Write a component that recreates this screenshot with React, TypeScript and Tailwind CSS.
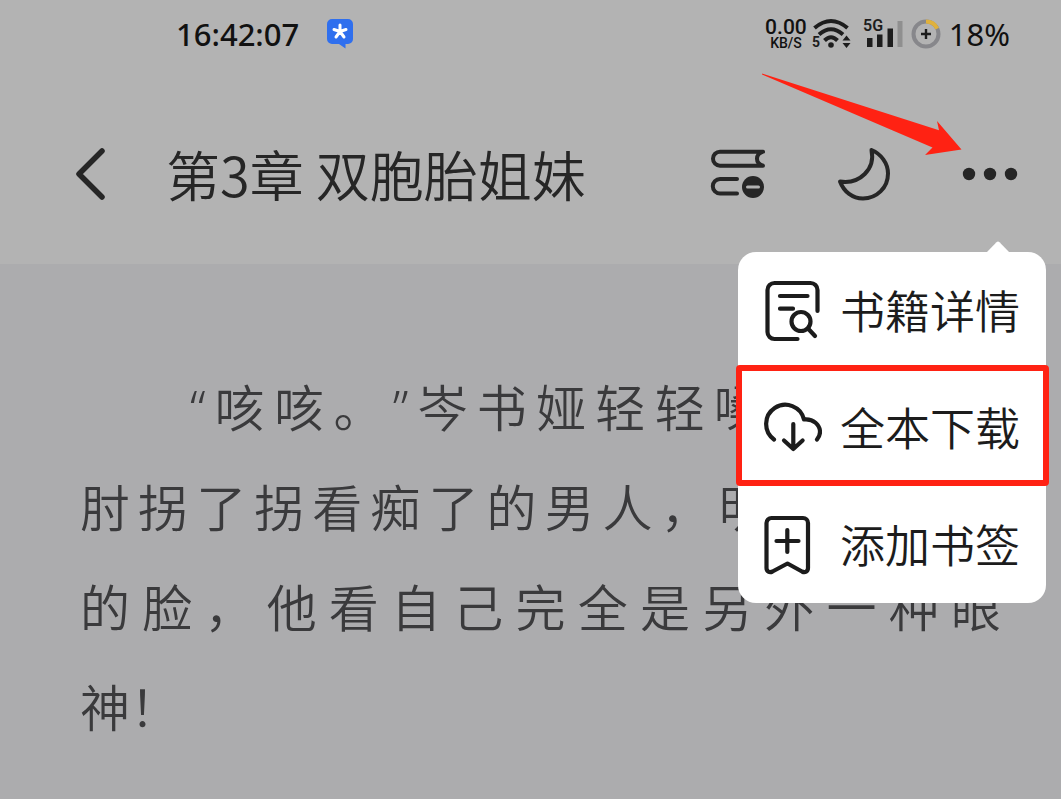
import type { ReactNode } from 'react'

const lines = [
  { text: '“咳咳。”岑书娅轻轻嗓两声，手', indent: true },
  { text: '肘拐了拐看痴了的男人，明明是同样', indent: false },
  { text: '的脸，他看自己完全是另外一种眼', indent: false },
]

function ChatBadge() {
  return (
    <svg width="26" height="30" viewBox="0 0 26 30" aria-hidden="true">
      <path d="M5 0h16a5 5 0 0 1 5 5v15a5 5 0 0 1-5 5h-2.500v4.500L12 25H5a5 5 0 0 1-5-5V5a5 5 0 0 1 5-5z" fill="#2f6fee" />
      <path d="M13 12.500V6M13 12.500l6-2M13 12.500l4 5.500M13 12.500L9 18M13 12.500l-6-2" stroke="#fff" strokeWidth="3" strokeLinecap="round" />
    </svg>
  )
}

function WifiIcon() {
  return (
    <svg width="40" height="32" viewBox="0 0 40 32" fill="none" stroke="#1d1d1d" strokeWidth="4" aria-hidden="true">
      <path d="M3.500 10Q20 -4 36.500 10M8 16.500Q20 6 32 16.500M13.500 22.500Q20 16 26.500 22.500" />
      <circle cx="20" cy="27" r="2.800" fill="#1d1d1d" stroke="none" />
      <path d="M31.500 22.500l4-5 4 5zM31.500 25l4 5 4-5z" fill="#1d1d1d" stroke="none" />
      <text x="1" y="29" fill="#1d1d1d" stroke="none" fontSize="14" fontWeight="700">5</text>
    </svg>
  )
}

function SignalIcon() {
  return (
    <svg width="40" height="40" viewBox="0 -4 40 40" fill="#1d1d1d" aria-hidden="true">
      <text x="0" y="13" fontSize="16" fontWeight="600">5G</text>
      <path d="M4 20h5.500v9H4zM14 16.500h5.500V29H14zM24.500 10.500H30V29h-5.500z" />
      <path d="M34.500 3h5v26h-5z" fill="#8f8f8f" />
    </svg>
  )
}

function BatteryIcon() {
  return (
    <svg width="30" height="30" viewBox="0 0 30 30" fill="none" aria-hidden="true">
      <circle cx="15" cy="15" r="12.500" stroke="#87878b" strokeWidth="4" />
      <path d="M15 2.500A12.500 12.500 0 0 1 26.300 9.700" stroke="#e0b13c" strokeWidth="4" />
      <path d="M15 10v10M10 15h10" stroke="#1d1d1d" strokeWidth="2.400" />
    </svg>
  )
}

function BackIcon() {
  return (
    <svg width="31" height="54" viewBox="0 0 31 54" fill="none" stroke="#262626" strokeWidth="5.500" strokeLinecap="round" strokeLinejoin="round" aria-hidden="true">
      <path d="M27 4L4 27l23 23" />
    </svg>
  )
}

function ShelfRemoveIcon() {
  return (
    <svg width="55" height="50" viewBox="0 0 55 50" fill="none" stroke="#262626" strokeWidth="4" strokeLinecap="round" strokeLinejoin="round" aria-hidden="true">
      <path d="M53 2.700H10a7 7 0 0 0 0 14h43C45 14 45 5.400 53 2.700z" />
      <path d="M27 30H10a7.200 7.200 0 0 0 0 14.400H27" />
      <circle cx="43" cy="38" r="11" fill="#262626" stroke="none" />
      <path d="M37.500 38h11" stroke="#b3b3b3" strokeWidth="3" />
    </svg>
  )
}

function MoonIcon() {
  return (
    <svg width="55" height="54" viewBox="0 0 55 54" fill="none" stroke="#262626" strokeWidth="4" strokeLinejoin="round" aria-hidden="true">
      <path d="M35.500 3C45 7 52 16 52 26.500 52 41 40.500 51.500 27 51.500 16.500 51.500 8 45 4 34.500 24 37.500 39.500 22 35.500 3z" />
    </svg>
  )
}

function MoreIcon() {
  return (
    <svg width="56" height="14" viewBox="0 0 56 14" fill="#262626" aria-hidden="true">
      <circle cx="7" cy="7" r="6.200" />
      <circle cx="28" cy="7" r="6.200" />
      <circle cx="49" cy="7" r="6.200" />
    </svg>
  )
}

function DetailIcon() {
  return (
    <svg width="58" height="62" viewBox="0 0 58 62" fill="none" stroke="#1c1c1c" strokeWidth="4.200" strokeLinecap="round" strokeLinejoin="round" aria-hidden="true">
      <path d="M53.500 31V10a7 7 0 0 0-7-7H10.500a7 7 0 0 0-7 7v42a7 7 0 0 0 7 7h23" />
      <path d="M16 16h27.500M16 28.700h13" />
      <circle cx="37" cy="41.500" r="9.500" />
      <path d="M44 48.500l7 7.500" />
    </svg>
  )
}

function CloudDownloadIcon() {
  return (
    <svg width="58" height="53" viewBox="0 0 58 53" fill="none" stroke="#1c1c1c" strokeWidth="4.200" strokeLinecap="round" strokeLinejoin="round" aria-hidden="true">
      <path d="M10 38.500A19.200 19.200 0 1 1 40 18.500C49.500 17.500 56 24 56 31c0 3-1 5-3 7.500" />
      <path d="M29.300 23v25M20 39.500l9.300 8.500 9.300-8.500" />
    </svg>
  )
}

function BookmarkIcon() {
  return (
    <svg width="48" height="60" viewBox="0 0 48 60" fill="none" stroke="#1c1c1c" strokeWidth="4.200" strokeLinecap="round" strokeLinejoin="round" aria-hidden="true">
      <path d="M7.500 3h31.500a5 5 0 0 1 5 5v45c0 3.500-3 5-6 3.500L23.500 48.500 8.500 56.500C5.500 58 2.500 56.500 2.500 53V8a5 5 0 0 1 5-5z" />
      <path d="M23.300 15v22M12.500 26h22" />
    </svg>
  )
}

function MenuItem({ icon, label, highlighted = false }: { icon: ReactNode; label: string; highlighted?: boolean }) {
  return (
    <li className="relative">
      <button type="button" className="flex h-[117px] w-full items-center gap-4 pl-[26px] text-left text-[45px] leading-none whitespace-nowrap text-[#1c1c1c]">
        <span className="flex w-[60px] shrink-0">{icon}</span>
        <span className="pb-0.5">{label}</span>
      </button>
      {highlighted && <span className="pointer-events-none absolute -top-1 -right-[3px] bottom-0 -left-[2px] rounded-[4px] border-6 border-[#ff2213]" />}
    </li>
  )
}

function App() {
  return (
    <div className="relative min-h-screen overflow-hidden bg-[#acacae] font-['Noto_Sans_CJK_SC',sans-serif] font-[350]">
      <header className="h-[264px] bg-[#b3b3b3]">
        <div className="flex h-[68px] items-center justify-between pr-[51px] pl-[176px] font-['Noto_Sans',sans-serif] font-medium text-[#111]">
          <div className="flex items-center gap-7">
            <time className="text-[31px] leading-none">16:42:07</time>
            <ChatBadge />
          </div>
          <div className="flex items-center font-['Roboto',sans-serif]">
            <div className="mr-1 text-center">
              <p className="text-[21px] leading-[18px]">0.00</p>
              <p className="text-[14px] leading-[14px]">KB/S</p>
            </div>
            <WifiIcon />
            <span className="ml-3 flex">
              <SignalIcon />
            </span>
            <span className="mr-2 ml-2 flex">
              <BatteryIcon />
            </span>
            <span className="font-['Noto_Sans',sans-serif] text-[31px] leading-none font-normal">18%</span>
          </div>
        </div>

        <nav className="flex h-[196px] items-center pt-4 pr-[43px] pl-[75px]">
          <button type="button" aria-label="返回">
            <BackIcon />
          </button>
          <h1 className="ml-15 flex-1 text-[54px] leading-none whitespace-nowrap text-[#262626]">第3章 双胞胎姐妹</h1>
          <div className="flex items-center gap-[71px]">
            <button type="button" aria-label="移出书架">
              <ShelfRemoveIcon />
            </button>
            <button type="button" aria-label="夜间模式">
              <MoonIcon />
            </button>
            <button type="button" aria-label="更多" aria-expanded="true">
              <MoreIcon />
            </button>
          </div>
        </nav>
      </header>

      <main className="pt-[94px] pr-15 pl-20 font-['Noto_Sans','Noto_Sans_CJK_SC',sans-serif] text-[50px] leading-[100px] text-[#3a3a3c] [text-spacing-trim:space-all]">
        {lines.map((line) => (
          <p key={line.text} className={`text-justify whitespace-nowrap [text-align-last:justify] ${line.indent ? 'pl-[110px]' : ''}`}>
            {line.text}
          </p>
        ))}
        <p>神！</p>
      </main>

      <div className="absolute top-[252px] right-[15px] w-[308px] rounded-[18px] bg-white">
        <svg className="absolute -top-[11px] right-[36px]" width="24" height="12" viewBox="0 0 24 12" fill="#fff" aria-hidden="true">
          <path d="M0 12L10.500 1.200q1.500-1.500 3 0L24 12z" />
        </svg>
        <ul>
          <MenuItem icon={<DetailIcon />} label="书籍详情" />
          <MenuItem icon={<CloudDownloadIcon />} label="全本下载" highlighted />
          <MenuItem icon={<BookmarkIcon />} label="添加书签" />
        </ul>
      </div>

      <svg className="pointer-events-none absolute top-[73px] right-[99px]" width="200" height="83" viewBox="0 0 200 83" fill="#ff2213" aria-hidden="true">
        <path d="M0 .500L177 57.300 175 48 199.500 76.500 163 82 170.500 74.500 0 1.500z" />
      </svg>
    </div>
  )
}

export default App
